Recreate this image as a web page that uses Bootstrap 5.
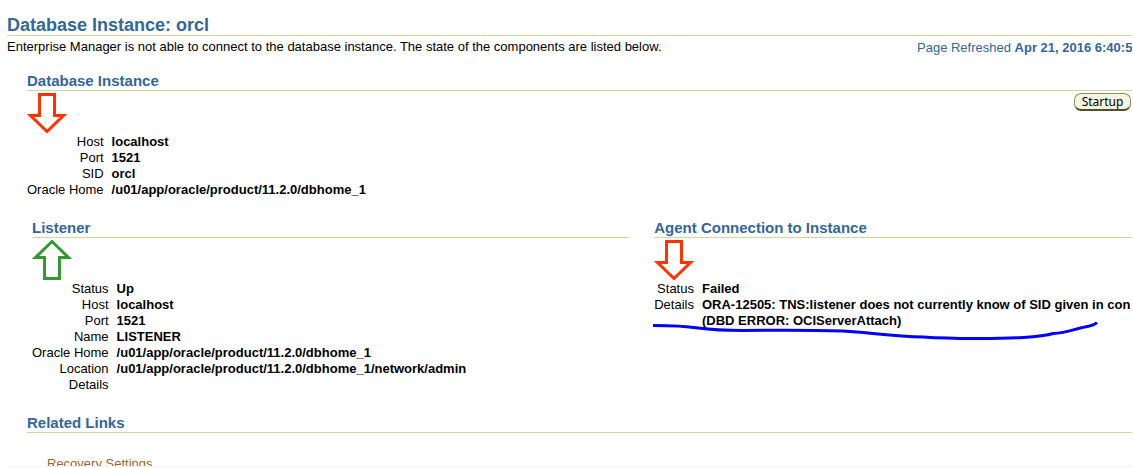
<!DOCTYPE html>
<html lang="en">
<head>
<meta charset="utf-8">
<meta name="viewport" content="width=device-width, initial-scale=1">
<title>Database Instance: orcl</title>
<link href="https://cdn.jsdelivr.net/npm/bootstrap@5.3.0/dist/css/bootstrap.min.css" rel="stylesheet">
<style>
  body { font-family: "Liberation Sans", Arial, sans-serif; font-size: 13px; line-height: 16px; color: #000; background: #fff; }
  .em-page { padding: 15px 1px 0 7px; overflow: hidden; }
  .em-title, .em-heading { color: #336699; font-weight: 700; margin: 0; border-bottom: 1px solid #cfd5a8; }
  .em-title { font-size: 18px; line-height: 20px; }
  .em-heading { font-size: 15px; line-height: 18px; }
  .em-intro { padding-top: 3px; }
  .em-refresh { flex: 0 0 215px; color: #336699; padding-top: 4px; margin-bottom: -1px; }
  .em-body { padding-left: 20px; margin-top: 17px; }
  .em-status { height: 43px; padding-top: 2px; }
  .em-status svg { display: block; }
  .em-facts { border-collapse: collapse; }
  .em-facts th { font-weight: 400; text-align: right; vertical-align: top; padding: 0 8px 0 0; white-space: nowrap; }
  .em-facts td { font-weight: 700; padding: 0; white-space: nowrap; }
  .em-btn { font: 12px/14px "Noto Sans", sans-serif; width: 57px; height: 18px; padding: 0; color: #000; background: #f5f5e1; border: 1px solid #8a8f66; border-bottom: 2px solid #4d5229; border-radius: 7px; margin: 0 1px 0 0; }
  .em-columns { grid-template-columns: 5fr 4fr; padding-left: 5px; margin-top: 21px; gap: 25px; }
  .em-agent { position: relative; min-width: 0; }
  .em-mark { position: absolute; left: -1px; top: 100px; }
  .em-related { margin-top: 21px; }
  .em-links { padding: 23px 0 0 20px; }
  .em-links div { height: 10px; overflow: hidden; }
  .em-links a { color: #996633; text-decoration: none; }
  .em-foot { border-top: 1px solid #f4f4f4; }
</style>
<script src="https://cdn.jsdelivr.net/npm/bootstrap@5.3.0/dist/js/bootstrap.bundle.min.js"></script>
</head>
<body>
<main class="em-page">
  <h1 class="em-title">Database Instance: orcl</h1>
  <div class="d-flex justify-content-between">
    <div class="em-intro">Enterprise Manager is not able to connect to the database instance. The state of the components are listed below.</div>
    <div class="em-refresh text-nowrap overflow-hidden">Page Refreshed <b>Apr 21, 2016 6:40:5</b></div>
  </div>

  <div class="em-body">
    <section>
      <h2 class="em-heading">Database Instance</h2>
      <div class="em-status d-flex justify-content-between align-items-start">
        <svg width="40" height="40" viewBox="0 0 40 40" role="img" aria-label="Down"><path d="M12.500 1.500h15v21h9L20 38.500 3.500 22.500h9z" fill="#fff" stroke="#ff3300" stroke-width="3"/></svg>
        <button type="button" class="em-btn">Startup</button>
      </div>
      <table class="em-facts">
        <tr><th scope="row">Host</th><td>localhost</td></tr>
        <tr><th scope="row">Port</th><td>1521</td></tr>
        <tr><th scope="row">SID</th><td>orcl</td></tr>
        <tr><th scope="row">Oracle Home</th><td>/u01/app/oracle/product/11.2.0/dbhome_1</td></tr>
      </table>
    </section>

    <div class="em-columns d-grid">
      <section>
        <h2 class="em-heading">Listener</h2>
        <div class="em-status">
          <svg width="40" height="40" viewBox="0 0 40 40" role="img" aria-label="Up"><path d="M12.500 38.500h15v-21h9L20 1.500 3.500 17.500h9z" fill="#fff" stroke="#339933" stroke-width="3"/></svg>
        </div>
        <table class="em-facts">
          <tr><th scope="row">Status</th><td>Up</td></tr>
          <tr><th scope="row">Host</th><td>localhost</td></tr>
          <tr><th scope="row">Port</th><td>1521</td></tr>
          <tr><th scope="row">Name</th><td>LISTENER</td></tr>
          <tr><th scope="row">Oracle Home</th><td>/u01/app/oracle/product/11.2.0/dbhome_1</td></tr>
          <tr><th scope="row">Location</th><td>/u01/app/oracle/product/11.2.0/dbhome_1/network/admin</td></tr>
          <tr><th scope="row">Details</th><td></td></tr>
        </table>
      </section>
      <section class="em-agent">
        <h2 class="em-heading">Agent Connection to Instance</h2>
        <div class="em-status">
          <svg width="40" height="40" viewBox="0 0 40 40" role="img" aria-label="Down"><path d="M12.500 1.500h15v21h9L20 38.500 3.500 22.500h9z" fill="#fff" stroke="#ff3300" stroke-width="3"/></svg>
        </div>
        <table class="em-facts">
          <tr><th scope="row">Status</th><td>Failed</td></tr>
          <tr><th scope="row">Details</th><td>ORA-12505: TNS:listener does not currently know of SID given in con<br>(DBD ERROR: OCIServerAttach)</td></tr>
        </table>
        <svg class="em-mark" width="450" height="26" viewBox="0 0 450 26" aria-hidden="true"><path d="M0 6.500C20 6.500 32 7 45 9C60 11 72 11.500 90 11.500C120 11 160 11 190 12C220 14 240 17 270 18C300 20 345 20 370 18.500C385 17.500 392 17 400 14.500C415 14 422 9.500 432 8C438 7 442 5.500 444 3.500" fill="none" stroke="#0000ff" stroke-width="3"/></svg>
      </section>
    </div>

    <section class="em-related">
      <h2 class="em-heading">Related Links</h2>
      <div class="em-links"><div><a href="#">Recovery Settings</a></div></div>
    </section>
  </div>
  <div class="em-foot"></div>
</main>
</body>
</html>
